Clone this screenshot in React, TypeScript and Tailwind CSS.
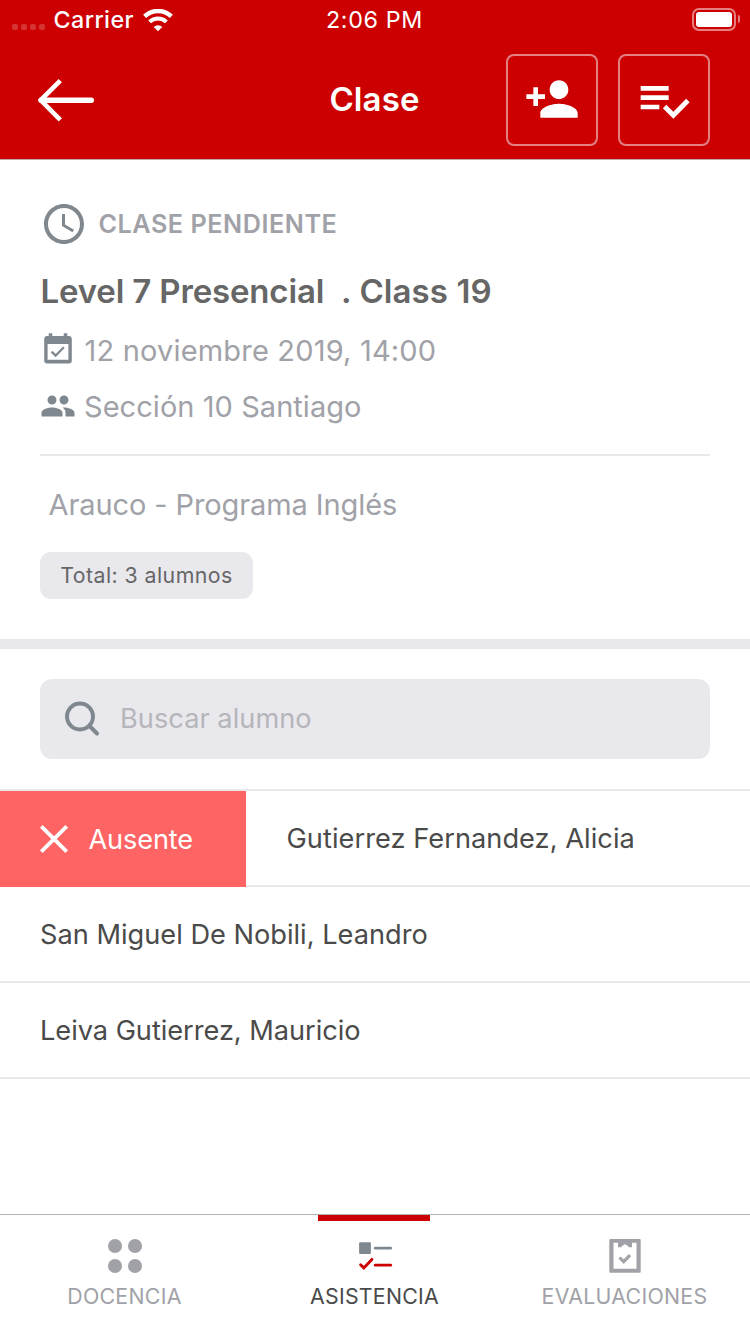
import type { ReactNode } from "react";

function StatusBar() {
  return (
    <div className="grid h-10 grid-cols-[1fr_auto_1fr] items-center pr-[11px] pl-3">
      <div className="flex items-center">
        <div className="mt-[14px] flex gap-[3px]">
          {[0, 1, 2, 3].map((i) => (
            <span key={i} className="size-[6px] rounded-[2px] bg-white/20" />
          ))}
        </div>
        <span className="ml-[8.5px] text-[23.3px] leading-[38px] font-medium tracking-[0.42px]">Carrier</span>
        <svg className="ml-[9px] h-[23px] w-[30px]" viewBox="0 0 30 23" fill="none" stroke="#fff">
          <path d="M1.6 7.4a19.2 19.2 0 0 1 26.8 0" strokeWidth="4.4" />
          <path d="M6.6 12.9a12 12 0 0 1 16.8 0" strokeWidth="4" />
          <path d="M15 22.3l-4.3-4.4a6.1 6.1 0 0 1 8.6 0z" fill="#fff" stroke="none" />
        </svg>
      </div>
      <span className="mr-[2px] text-[23.3px] leading-[38px] tracking-[0.65px]">2:06 PM</span>
      <div className="mb-[2px] flex items-center justify-end gap-[2px]">
        <span className="flex h-[23px] w-[44px] rounded-[7px] border-2 border-white/50 p-[2px]">
          <span className="flex-1 rounded-[3px] bg-white" />
        </span>
        <span className="-mr-[1px] h-[8px] w-[2px] rounded-r-full bg-white/50" />
      </div>
    </div>
  );
}

function HeaderButton({ children }: { children: ReactNode }) {
  return (
    <button className="flex size-[92px] items-center justify-center rounded-[8px] border-2 border-white/50">
      {children}
    </button>
  );
}

function Header() {
  return (
    <header className="h-40 border-b border-[#b9a9a9] bg-[#cc0000] text-white">
      <StatusBar />
      <div className="grid h-[119px] grid-cols-[1fr_auto_1fr] items-center px-10">
        <svg className="-ml-[3px] h-[44px] w-[58px]" viewBox="0 0 58 44" fill="none" stroke="#fff">
          <path d="M4 22.2H54.3" strokeWidth="5.4" strokeLinecap="round" />
          <path d="M23.3 2.6L3.7 22.2L23.3 41.8" strokeWidth="4.6" strokeLinejoin="round" />
        </svg>
        <h1 className="mr-[1px] mb-[2px] text-[33px] leading-[40px] font-semibold tracking-[0.14px]">Clase</h1>
        <div className="flex justify-end gap-5">
          <HeaderButton>
            <svg className="-mt-[2px] size-[56px]" viewBox="0 0 24 24" fill="#fff">
              <path d="M15 12c2.21 0 4-1.79 4-4s-1.79-4-4-4-4 1.79-4 4 1.79 4 4 4zm-9-2V7H4v3H1v2h3v3h2v-3h3v-2H6zm9 4c-2.67 0-8 1.34-8 4v2h16v-2c0-2.66-5.33-4-8-4z" />
            </svg>
          </HeaderButton>
          <HeaderButton>
            <svg className="size-[56px]" viewBox="0 0 24 24" fill="#fff">
              <path d="M14 10H2v2h12v-2zm0-4H2v2h12V6zM2 16h8v-2H2v2zm19.5-4.5L23 13l-6.99 7-4.51-4.5L13 14l3.01 3 5.49-5.5z" />
            </svg>
          </HeaderButton>
        </div>
      </div>
    </header>
  );
}

function ClassInfo() {
  return (
    <section className="h-[489px] border-b-[10px] border-[#e9e8ed] px-10 pt-10 text-[#a1a1a8]">
      <div className="flex h-12 items-center">
        <svg className="size-12" viewBox="0 0 24 24" fill="#80888f">
          <path d="M11.99 2C6.47 2 2 6.48 2 12s4.47 10 9.99 10C17.52 22 22 17.52 22 12S17.52 2 11.99 2zM12 20c-4.42 0-8-3.58-8-8s3.58-8 8-8 8 3.58 8 8-3.58 8-8 8zm.5-13H11v6l5.25 3.15.75-1.23-4.5-2.67z" />
        </svg>
        <span className="ml-[10.5px] text-[25.2px] leading-[48px] font-semibold tracking-[0.53px]">
          CLASE PENDIENTE
        </span>
      </div>
      <h2 className="mt-[23px] ml-[0.5px] text-[33px] leading-[40px] font-semibold tracking-[0.1px] whitespace-pre text-[#666]">
        <span className="tracking-[-0.16px]">Level 7 Presencial</span>
        {"  "}. Class 19
      </h2>
      <div className="mt-[20px] flex h-[40px] items-center text-[29px] leading-[40px] tracking-[0.18px]">
        <svg className="mr-[8px] mb-[4px] ml-1 h-[32px] w-[28px] shrink-0" viewBox="0 0 28 32" fill="none">
          <path d="M4.7 .3h3.6v4H4.7zM19.7 .3h3.6v4h-3.6z" fill="#80888f" />
          <path
            d="M3.2 2.9h21.6a3 3 0 0 1 3 3v21.6a3 3 0 0 1-3 3H3.2a3 3 0 0 1-3-3V5.9a3 3 0 0 1 3-3zM3.6 11v15.7h20.8V11z"
            fillRule="evenodd"
            fill="#80888f"
          />
          <path d="M7.6 18.6l4 4 8.3-8.3" stroke="#80888f" strokeWidth="2.2" />
        </svg>
        <span className="ml-[4.5px]">12 noviembre 2019, 14:00</span>
      </div>
      <div className="mt-[16px] flex h-[40px] items-center text-[29px] leading-[40px] tracking-[0.05px]">
        <svg className="mr-[8px] mb-[2px] size-[36px] shrink-0" viewBox="0 0 24 24" fill="#80888f">
          <path d="M16 11c1.66 0 2.99-1.34 2.99-3S17.66 5 16 5c-1.66 0-3 1.34-3 3s1.34 3 3 3zm-8 0c1.66 0 2.99-1.34 2.99-3S9.66 5 8 5C6.34 5 5 6.34 5 8s1.34 3 3 3zm0 2c-2.33 0-7 1.17-7 3.5V19h14v-2.5c0-2.33-4.67-3.5-7-3.5zm8 0c-.29 0-.62.02-.97.05 1.16.84 1.97 1.97 1.97 3.45V19h6v-2.5c0-2.33-4.67-3.5-7-3.5z" />
        </svg>
        <span>Sección 10 Santiago</span>
      </div>
      <hr className="mt-[27px] border-t-2 border-[#e9e8ed]" />
      <p className="mt-[29px] ml-[8.5px] text-[29px] leading-[40px] tracking-[-0.1px]">
        Arauco - Programa Inglés
      </p>
      <span className="mt-[27px] flex h-[47px] w-[213px] items-center justify-center rounded-[11px] bg-[#e9e8ed] text-[21.3px] leading-[47px] tracking-[0.44px] text-[#666]">
        Total: 3 alumnos
      </span>
    </section>
  );
}

function Search() {
  return (
    <div className="px-10 pt-[30px] pb-[30px]">
      <div className="flex h-20 items-center rounded-[12px] bg-[#e9e8ed] pl-6">
        <svg className="mb-[1px] size-[38px]" viewBox="0 0 38 38" fill="none" stroke="#80888f" strokeWidth="4" strokeLinecap="round">
          <circle cx="16" cy="16.5" r="13" />
          <path d="M25.5 26L33 33.5" />
        </svg>
        <span className="ml-[18px] text-[27.2px] leading-[40px] tracking-[0.03px] text-[#b5b5ba]">
          Buscar alumno
        </span>
      </div>
    </div>
  );
}

function StudentList() {
  const row = "flex h-24 items-center border-b-2 border-[#e9e8ed] text-[27.2px] leading-[40px]";
  return (
    <ul className="border-t-2 border-[#e9e8ed] text-[#4a4a4a]">
      <li className={row}>
        <div className="-mb-[2px] flex h-24 w-[246px] items-center bg-[#ff6464] pl-[39px] text-white">
          <svg className="size-[30px]" viewBox="0 0 30 30" stroke="#fff" strokeWidth="3.8">
            <path d="M2.3 2.3L27.7 27.7M27.7 2.3L2.3 27.7" />
          </svg>
          <span className="mt-[2px] ml-[19.5px] tracking-[-0.15px]">Ausente</span>
        </div>
        <span className="mt-[2px] ml-[40.5px] tracking-[0.05px]">Gutierrez Fernandez, Alicia</span>
      </li>
      <li className={row}>
        <span className="mt-[2px] ml-[40px]">San Miguel De Nobili, Leandro</span>
      </li>
      <li className={row}>
        <span className="mt-[2px] ml-[40px] tracking-[-0.04px]">Leiva Gutierrez, Mauricio</span>
      </li>
    </ul>
  );
}

function Tab({ label, active, icon }: { label: ReactNode; active?: boolean; icon: ReactNode }) {
  return (
    <div className={`flex flex-1 flex-col items-center ${active ? "text-[#4a4a4a]" : "text-[#a1a1a8]"}`}>
      <span className={`mr-[2px] h-[6px] w-28 ${active ? "bg-[#cc0000]" : "bg-transparent"}`} />
      <span className="mt-[17px]">{icon}</span>
      <span className="mt-[7px] mr-[1px] text-[21.3px] leading-[30px]">{label}</span>
    </div>
  );
}

function TabBar() {
  return (
    <nav className="mt-auto flex h-[120px] border-t border-[#b2b2b2]">
      <Tab
        label={<span className="tracking-[0.32px]">DOCENCIA</span>}
        icon={
          <svg className="size-[36px]" viewBox="0 0 36 36" fill="#a1a1a8">
            <circle cx="8" cy="8" r="7" />
            <circle cx="28" cy="8" r="7" />
            <circle cx="8" cy="28" r="7" />
            <circle cx="28" cy="28" r="7" />
          </svg>
        }
      />
      <Tab
        active
        label={<span className="tracking-[0.26px]">ASISTENCIA</span>}
        icon={
          <svg className="size-[36px]" viewBox="0 0 36 36" fill="none" strokeLinecap="round">
            <rect x="2.1" y="4.2" width="11.8" height="11.7" rx="1" fill="#80888f" />
            <path d="M18.2 10.2h15.5" stroke="#80888f" strokeWidth="2.7" />
            <path d="M18.2 27.2h15.5" stroke="#cc0000" strokeWidth="2.7" />
            <path d="M3.6 26.7l3.2 3.2 8.1-8.5" stroke="#cc0000" strokeWidth="2.9" />
          </svg>
        }
      />
      <Tab
        label={<span className="tracking-[0.3px]">EVALUACIONES</span>}
        icon={
          <svg className="size-[36px]" viewBox="0 0 36 36" fill="none">
            <path
              d="M3.3 1h29.4a1 1 0 0 1 1 1v31.8a1 1 0 0 1-1 1H3.3a1 1 0 0 1-1-1V2a1 1 0 0 1 1-1zM6.5 4.8V30.7h23V4.8h-4.5V9.2h-3.3c-.3-1-1-1.5-1.600-1.500-.5-1.600-3.700-1.600-4.200 0-.6 0-1.300.5-1.600 1.500H11V4.8z"
              fillRule="evenodd"
              fill="#a1a1a8"
            />
            <path d="M12.5 19.5l4.2 4.2 6.3-6.5" stroke="#a1a1a8" strokeWidth="3.1" />
          </svg>
        }
      />
    </nav>
  );
}

export default function App() {
  return (
    <div className="flex h-[1334px] w-[750px] flex-col overflow-hidden bg-white font-[Inter,sans-serif]">
      <Header />
      <ClassInfo />
      <Search />
      <StudentList />
      <TabBar />
    </div>
  );
}
